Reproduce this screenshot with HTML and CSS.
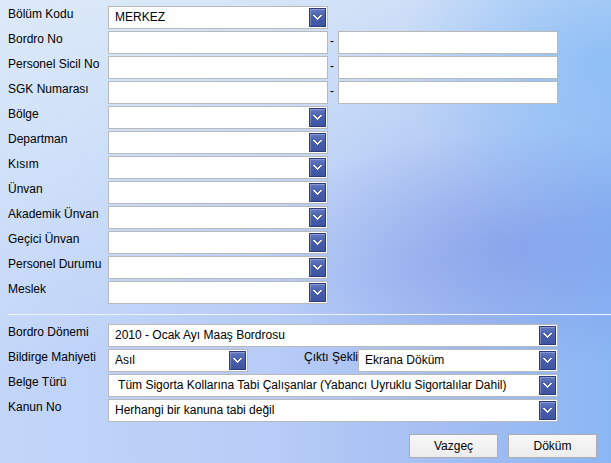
FILE: index.html
```html
<!DOCTYPE html>
<html lang="tr">
<head>
<meta charset="utf-8">
<title>Bordro Döküm</title>
<link rel="stylesheet" href="styles.css">
</head>
<body>
<div class="form">
  <div class="top">
    <div class="lbl">Bölüm Kodu</div>
    <div class="select"><span class="val">MERKEZ</span><span class="dd"><svg width="9" height="5" viewBox="0 0 9 5" shape-rendering="crispEdges"><path d="M0 0h2v1H0zM7 0h2v1H7zM1 1h2v1H1zM6 1h2v1H6zM2 2h2v1H2zM5 2h2v1H5zM3 3h3v1H3zM4 4h1v1H4z" fill="#fff"/></svg></span></div>

    <div class="lbl">Bordro No</div>
    <div class="input"></div>
    <div class="dash">-</div>
    <div class="input"></div>

    <div class="lbl">Personel Sicil No</div>
    <div class="input"></div>
    <div class="dash">-</div>
    <div class="input"></div>

    <div class="lbl">SGK Numarası</div>
    <div class="input"></div>
    <div class="dash">-</div>
    <div class="input"></div>

    <div class="lbl">Bölge</div>
    <div class="select"><span class="val"></span><span class="dd"><svg width="9" height="5" viewBox="0 0 9 5" shape-rendering="crispEdges"><path d="M0 0h2v1H0zM7 0h2v1H7zM1 1h2v1H1zM6 1h2v1H6zM2 2h2v1H2zM5 2h2v1H5zM3 3h3v1H3zM4 4h1v1H4z" fill="#fff"/></svg></span></div>

    <div class="lbl">Departman</div>
    <div class="select"><span class="val"></span><span class="dd"><svg width="9" height="5" viewBox="0 0 9 5" shape-rendering="crispEdges"><path d="M0 0h2v1H0zM7 0h2v1H7zM1 1h2v1H1zM6 1h2v1H6zM2 2h2v1H2zM5 2h2v1H5zM3 3h3v1H3zM4 4h1v1H4z" fill="#fff"/></svg></span></div>

    <div class="lbl">Kısım</div>
    <div class="select"><span class="val"></span><span class="dd"><svg width="9" height="5" viewBox="0 0 9 5" shape-rendering="crispEdges"><path d="M0 0h2v1H0zM7 0h2v1H7zM1 1h2v1H1zM6 1h2v1H6zM2 2h2v1H2zM5 2h2v1H5zM3 3h3v1H3zM4 4h1v1H4z" fill="#fff"/></svg></span></div>

    <div class="lbl">Ünvan</div>
    <div class="select"><span class="val"></span><span class="dd"><svg width="9" height="5" viewBox="0 0 9 5" shape-rendering="crispEdges"><path d="M0 0h2v1H0zM7 0h2v1H7zM1 1h2v1H1zM6 1h2v1H6zM2 2h2v1H2zM5 2h2v1H5zM3 3h3v1H3zM4 4h1v1H4z" fill="#fff"/></svg></span></div>

    <div class="lbl">Akademik Ünvan</div>
    <div class="select"><span class="val"></span><span class="dd"><svg width="9" height="5" viewBox="0 0 9 5" shape-rendering="crispEdges"><path d="M0 0h2v1H0zM7 0h2v1H7zM1 1h2v1H1zM6 1h2v1H6zM2 2h2v1H2zM5 2h2v1H5zM3 3h3v1H3zM4 4h1v1H4z" fill="#fff"/></svg></span></div>

    <div class="lbl">Geçici Ünvan</div>
    <div class="select"><span class="val"></span><span class="dd"><svg width="9" height="5" viewBox="0 0 9 5" shape-rendering="crispEdges"><path d="M0 0h2v1H0zM7 0h2v1H7zM1 1h2v1H1zM6 1h2v1H6zM2 2h2v1H2zM5 2h2v1H5zM3 3h3v1H3zM4 4h1v1H4z" fill="#fff"/></svg></span></div>

    <div class="lbl">Personel Durumu</div>
    <div class="select"><span class="val"></span><span class="dd"><svg width="9" height="5" viewBox="0 0 9 5" shape-rendering="crispEdges"><path d="M0 0h2v1H0zM7 0h2v1H7zM1 1h2v1H1zM6 1h2v1H6zM2 2h2v1H2zM5 2h2v1H5zM3 3h3v1H3zM4 4h1v1H4z" fill="#fff"/></svg></span></div>

    <div class="lbl">Meslek</div>
    <div class="select"><span class="val"></span><span class="dd"><svg width="9" height="5" viewBox="0 0 9 5" shape-rendering="crispEdges"><path d="M0 0h2v1H0zM7 0h2v1H7zM1 1h2v1H1zM6 1h2v1H6zM2 2h2v1H2zM5 2h2v1H5zM3 3h3v1H3zM4 4h1v1H4z" fill="#fff"/></svg></span></div>
  </div>

  <div class="sep"></div>

  <div class="bottom">
    <div class="lbl">Bordro Dönemi</div>
    <div class="select wide"><span class="val">2010 - Ocak Ayı Maaş Bordrosu</span><span class="dd"><svg width="9" height="5" viewBox="0 0 9 5" shape-rendering="crispEdges"><path d="M0 0h2v1H0zM7 0h2v1H7zM1 1h2v1H1zM6 1h2v1H6zM2 2h2v1H2zM5 2h2v1H5zM3 3h3v1H3zM4 4h1v1H4z" fill="#fff"/></svg></span></div>

    <div class="lbl">Bildirge Mahiyeti</div>
    <div class="select"><span class="val">Asıl</span><span class="dd"><svg width="9" height="5" viewBox="0 0 9 5" shape-rendering="crispEdges"><path d="M0 0h2v1H0zM7 0h2v1H7zM1 1h2v1H1zM6 1h2v1H6zM2 2h2v1H2zM5 2h2v1H5zM3 3h3v1H3zM4 4h1v1H4z" fill="#fff"/></svg></span></div>
    <div class="lbl inline">Çıktı Şekli</div>
    <div class="select"><span class="val">Ekrana Döküm</span><span class="dd"><svg width="9" height="5" viewBox="0 0 9 5" shape-rendering="crispEdges"><path d="M0 0h2v1H0zM7 0h2v1H7zM1 1h2v1H1zM6 1h2v1H6zM2 2h2v1H2zM5 2h2v1H5zM3 3h3v1H3zM4 4h1v1H4z" fill="#fff"/></svg></span></div>

    <div class="lbl">Belge Türü</div>
    <div class="select wide"><span class="val"> Tüm Sigorta Kollarına Tabi Çalışanlar (Yabancı Uyruklu Sigortalılar Dahil)</span><span class="dd"><svg width="9" height="5" viewBox="0 0 9 5" shape-rendering="crispEdges"><path d="M0 0h2v1H0zM7 0h2v1H7zM1 1h2v1H1zM6 1h2v1H6zM2 2h2v1H2zM5 2h2v1H5zM3 3h3v1H3zM4 4h1v1H4z" fill="#fff"/></svg></span></div>

    <div class="lbl">Kanun No</div>
    <div class="select wide"><span class="val">Herhangi bir kanuna tabi değil</span><span class="dd"><svg width="9" height="5" viewBox="0 0 9 5" shape-rendering="crispEdges"><path d="M0 0h2v1H0zM7 0h2v1H7zM1 1h2v1H1zM6 1h2v1H6zM2 2h2v1H2zM5 2h2v1H5zM3 3h3v1H3zM4 4h1v1H4z" fill="#fff"/></svg></span></div>
  </div>

  <div class="actions">
    <button class="btn">Vazgeç</button>
    <button class="btn">Döküm</button>
  </div>
</div>
</body>
</html>
```

FILE: styles.css
```css
html, body {
  margin: 0;
  height: 100%;
}

body {
  width: 611px;
  height: 463px;
  overflow: hidden;
  font-family: "Liberation Sans", Arial, sans-serif;
  font-size: 12px;
  color: #000;
  background:
    radial-gradient(ellipse 260px 120px at 520px 250px, rgba(118, 140, 226, 0.45), rgba(118, 140, 226, 0)),
    radial-gradient(ellipse 200px 160px at 600px 60px, rgba(130, 185, 245, 0.7), rgba(130, 185, 245, 0)),
    linear-gradient(165deg, rgba(220, 234, 248, 1) 0%, rgba(214, 230, 248, 0.6) 30%, rgba(214, 230, 248, 0) 60%),
    linear-gradient(to right, #c3d6f9 0%, #b7ccf6 45%, #a2bdf2 75%, #8ab7f4 100%);
}

.form {
  padding: 6px 0 0 8px;
}

.top {
  display: grid;
  grid-template-columns: 100px 220px 10px 220px;
  grid-auto-rows: 23px;
  row-gap: 2px;
}

.lbl {
  grid-column: 1;
  padding-top: 1px;
  line-height: 14px;
  white-space: nowrap;
}

.input,
.select {
  box-sizing: border-box;
  height: 23px;
  background: #fff;
  border: 1px solid #b9b9b9;
}

.select {
  display: flex;
  align-items: center;
  padding: 1px;
}

.val {
  flex: 1;
  padding-left: 5px;
  white-space: pre;
  line-height: 19px;
  overflow: hidden;
}

.dd {
  box-sizing: border-box;
  width: 17px;
  height: 19px;
  display: flex;
  align-items: center;
  justify-content: center;
  background: linear-gradient(#6479c2, #4a5fab 45%, #3f54a0);
  border: 1px solid #2b3b7c;
  box-shadow: inset 1px 1px 0 rgba(255, 255, 255, 0.25);
}

.dd svg {
  display: block;
}

.dash {
  text-align: center;
  line-height: 20px;
  padding-right: 2px;
}

.sep {
  height: 1px;
  margin-top: 10px;
  background: #eef2f9;
}

.bottom {
  margin-top: 9px;
  display: grid;
  grid-template-columns: 100px 140px 110px 200px;
  grid-auto-rows: 23px;
  row-gap: 2px;
}

.wide {
  grid-column: 2 / 5;
}

.lbl.inline {
  grid-column: 3;
  justify-self: end;
}

.actions {
  display: flex;
  justify-content: flex-end;
  gap: 10px;
  margin-top: 12px;
  padding-right: 14px;
}

.btn {
  width: 89px;
  height: 24px;
  padding: 0;
  font: inherit;
  color: #000;
  background: linear-gradient(#f7f7f7, #ececec);
  border: 1px solid #adadad;
  border-radius: 0;
}
```
